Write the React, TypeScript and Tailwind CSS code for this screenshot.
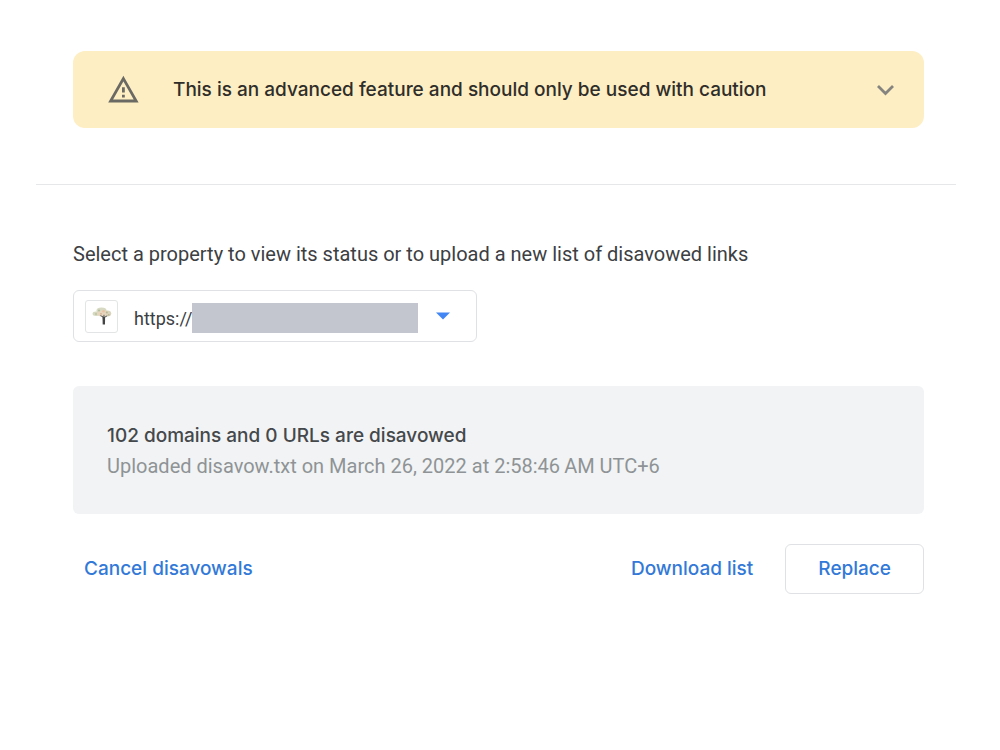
import React from 'react';

const properties = [{ value: 'main', label: 'https://' }];

const WarningIcon = () => (
  <svg className="w-8 h-8 shrink-0" viewBox="0 0 32 32" fill="none" aria-hidden="true">
    <path d="M16.4 4.6 29.2 27H3.6L16.4 4.6Z" stroke="#6b6963" strokeWidth="2.8" />
    <path d="M16.4 13.2v5.4M16.4 20.8v2.8" stroke="#6b6963" strokeWidth="2.8" />
  </svg>
);

const ChevronIcon = () => (
  <svg className="w-5 h-5 shrink-0" viewBox="0 0 20 20" fill="none" aria-hidden="true">
    <path d="m2 6 7.5 7.5L17 6" stroke="#85847f" strokeWidth="2.8" />
  </svg>
);

const Favicon = () => (
  <span className="flex items-center justify-center w-[33px] h-[33px] shrink-0 rounded-[3px] border border-[#e3e4e6] bg-white">
    <svg className="w-5 h-5" viewBox="0 0 20 20" aria-hidden="true">
      <g opacity="0.85">
        <ellipse cx="9.5" cy="4.4" rx="5" ry="2.9" fill="#d2d3b8" />
        <ellipse cx="4.2" cy="7.8" rx="3.6" ry="2.2" fill="#cfd3b6" />
        <ellipse cx="15.4" cy="7.4" rx="3.8" ry="3" fill="#d3cdb0" />
        <ellipse cx="10" cy="7.6" rx="5" ry="2.8" fill="#e2cfb4" />
        <circle cx="7" cy="4.6" r="1" fill="#a3b18a" />
        <circle cx="11.6" cy="5.2" r="1.3" fill="#e8b894" />
        <circle cx="14.8" cy="6.6" r="1" fill="#acae86" />
        <circle cx="4" cy="8" r="0.9" fill="#aeb78f" />
        <circle cx="16.8" cy="8.8" r="0.9" fill="#b3a983" />
        <circle cx="9" cy="7.8" r="0.9" fill="#cda380" />
      </g>
      <path
        d="M11.5 13.4 11.3 11 8.4 9.6M11.8 12l.2-3.2M12 11.6l3.2-1.8"
        stroke="#5d5b57"
        strokeWidth="1"
        fill="none"
      />
      <path d="M10.7 18.5 10.5 10.8h2.6l-.1 7.7Z" fill="#444444" />
    </svg>
  </span>
);

const App = () => {
  return (
    <main className="pl-9 pr-11 pt-[51px] pb-12 bg-white font-['Roboto',sans-serif]">
      {/* Warning */}
      <div className="pl-[37px] pr-8">
        <button
          type="button"
          aria-expanded="false"
          className="flex items-center w-full h-[77px] pl-[34px] pr-7 rounded-xl bg-[#fdeec3] text-left cursor-pointer"
        >
          <WarningIcon />
          <span className="flex-1 ml-[34px] font-['Inter',sans-serif] text-[19px] leading-7 font-medium text-[#2f2d29]">
            This is an advanced feature and should only be used with caution
          </span>
          <ChevronIcon />
        </button>
      </div>

      <hr className="mt-14 border-[#e6e7e9]" />

      <div className="pl-[37px] pr-8 pt-[55px]">
        {/* Property */}
        <label htmlFor="property" className="block text-[20px] leading-7 text-[#3c4043]">
          Select a property to view its status or to upload a new list of disavowed links
        </label>
        <div className="flex items-center w-full max-w-[404px] h-[52px] mt-[22px] pl-[11px] pr-[25px] rounded-md border border-[#dfe1e4]">
          <Favicon />
          <div className="relative flex-1 ml-4">
            <select
              id="property"
              className="block w-full h-9 pt-1 appearance-none bg-transparent text-[18px] text-[#3c4043] outline-none"
            >
              {properties.map((property) => (
                <option key={property.value} value={property.value}>
                  {property.label}
                </option>
              ))}
            </select>
            <span className="absolute top-[5px] bottom-px left-[58px] right-[33px] bg-[#c4c6cf] pointer-events-none" />
            <svg
              className="absolute right-0 top-3.5 w-4 h-2 pointer-events-none"
              viewBox="0 0 16 8"
              aria-hidden="true"
            >
              <path d="M1 .5h14L8 7.5Z" fill="#4285f4" />
            </svg>
          </div>
        </div>

        {/* Status */}
        <section className="mt-11 pl-[34px] pr-8 pt-[35px] pb-[33px] rounded-md bg-[#f1f3f4]">
          <h2 className="font-['Inter',sans-serif] text-[19px] leading-[30px] font-medium text-[#45484b]">
            102 domains and 0 URLs are disavowed
          </h2>
          <p className="text-[20px] leading-[30px] text-[#8f9396]">
            Uploaded disavow.txt on March 26, 2022 at 2:58:46{'\u2009'}AM UTC+6
          </p>
        </section>

        {/* Actions */}
        <div className="flex items-center mt-[30px] font-['Inter',sans-serif] text-[19px] leading-7 font-medium text-[#3279d8]">
          <button type="button" className="h-[50px] px-[11px] cursor-pointer">
            Cancel disavowals
          </button>
          <button type="button" className="h-[50px] ml-auto px-8 cursor-pointer">
            Download list
          </button>
          <button
            type="button"
            className="h-[50px] px-8 rounded-md border border-[#dfe1e4] cursor-pointer"
          >
            Replace
          </button>
        </div>
      </div>
    </main>
  );
};

export default App;
